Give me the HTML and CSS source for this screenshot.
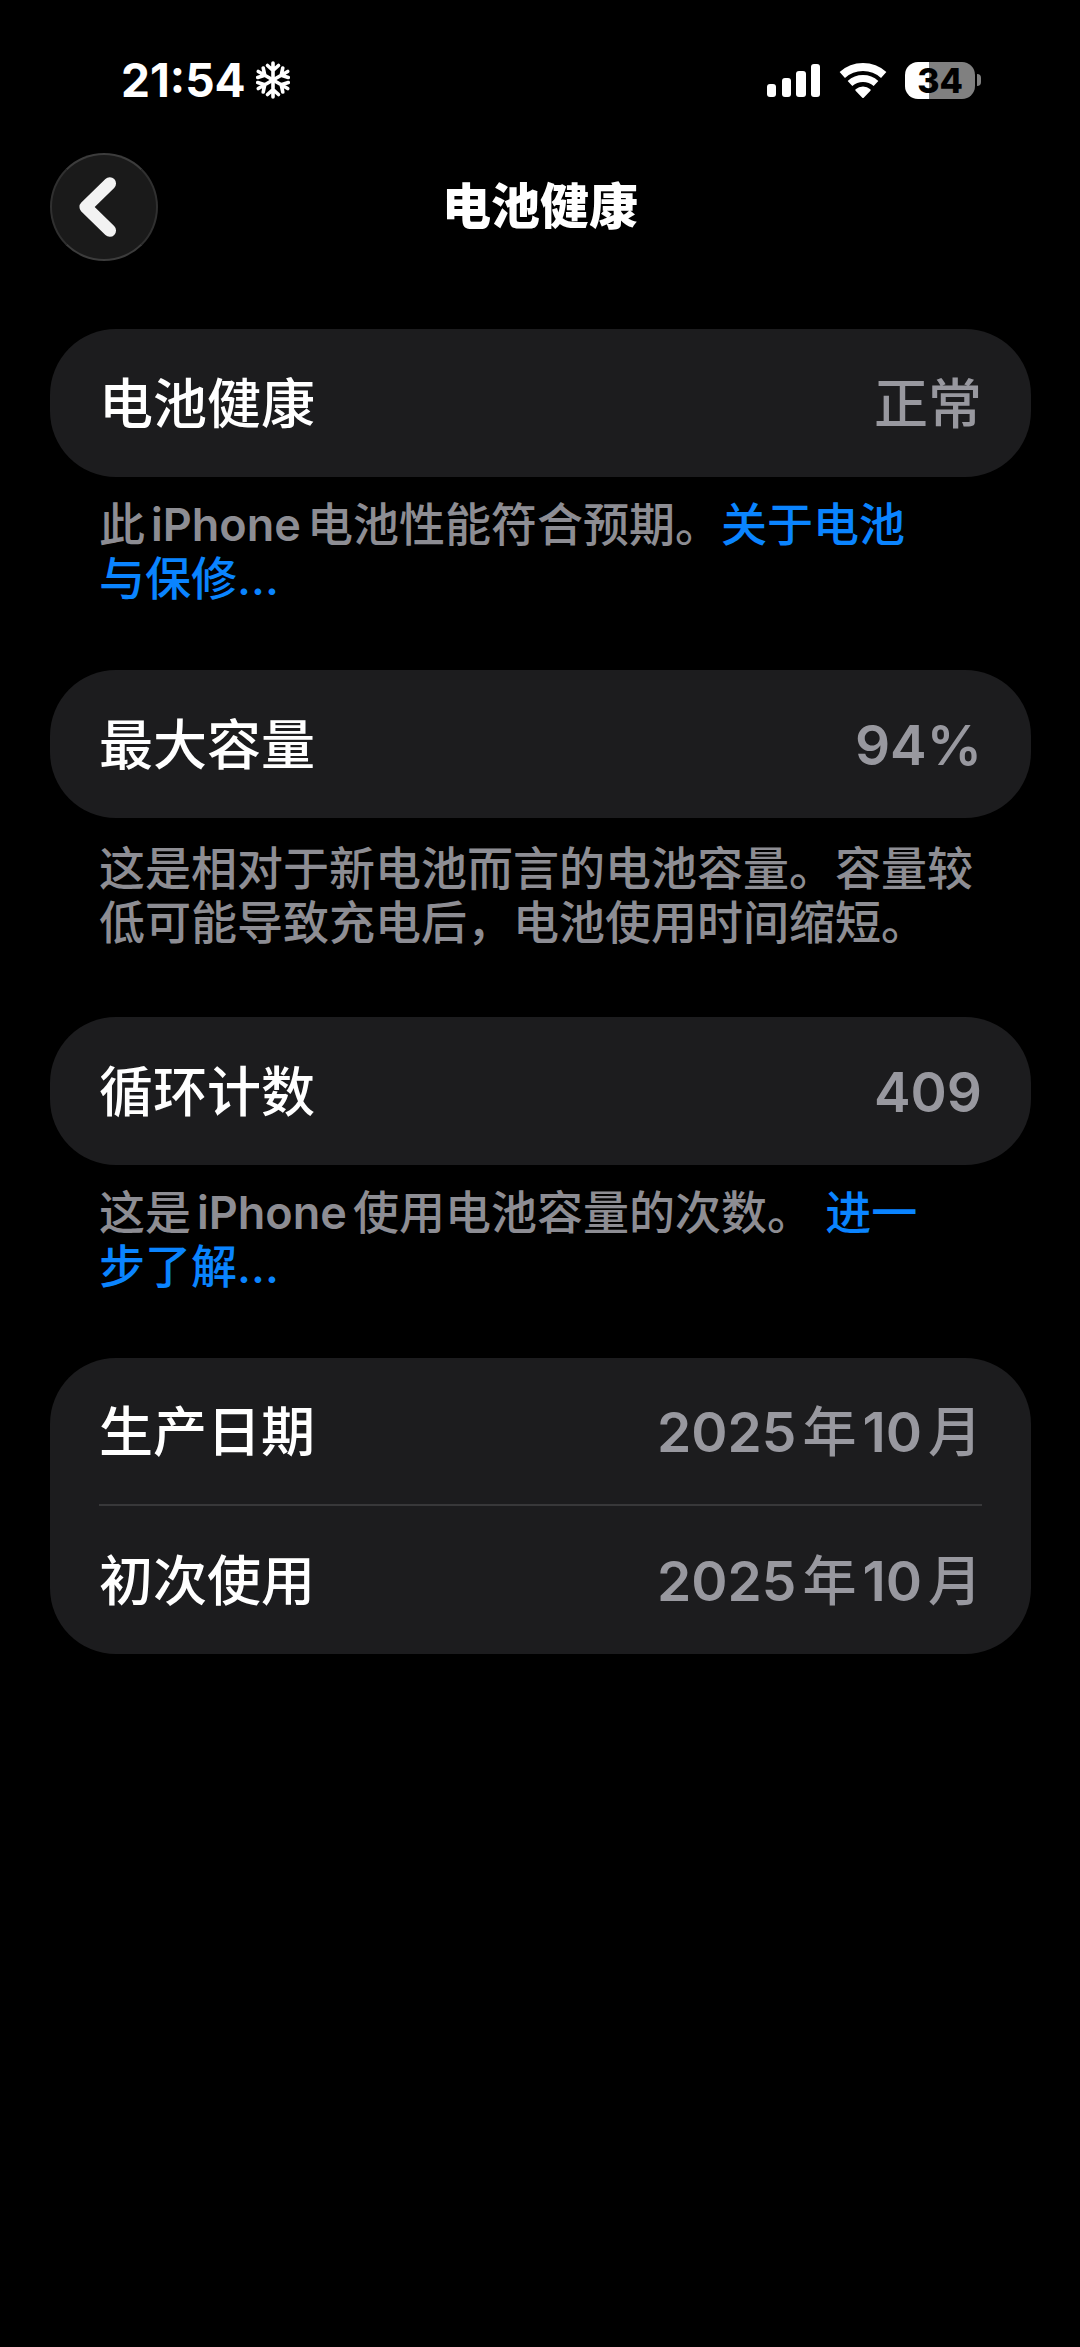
FILE: index.html
```html
<!DOCTYPE html>
<html lang="zh-CN">
<head>
  <meta charset="UTF-8" />
  <meta name="viewport" content="width=device-width, initial-scale=1" />
  <title>电池健康</title>
  <link rel="stylesheet" href="styles.css">
</head>
<body>
  <div class="status-bar">
    <div class="status-left">
      <span class="clock">21:54</span>
      <svg class="snowflake" viewBox="-19 -19 38 38" aria-hidden="true">
        <defs>
          <path id="arm" d="M0 0V-17M-5.5 -14.5L0 -9.5L5.5 -14.5" />
        </defs>
        <use href="#arm" />
        <use href="#arm" transform="rotate(60)" />
        <use href="#arm" transform="rotate(120)" />
        <use href="#arm" transform="rotate(180)" />
        <use href="#arm" transform="rotate(240)" />
        <use href="#arm" transform="rotate(300)" />
      </svg>
    </div>
    <div class="status-right">
      <svg class="signal" viewBox="0 0 54 34" aria-hidden="true">
        <rect x="0" y="21" width="9" height="13" rx="3" />
        <rect x="15" y="15" width="9" height="19" rx="3" />
        <rect x="29" y="8" width="10" height="26" rx="3" />
        <rect x="44" y="1" width="9" height="33" rx="3" />
      </svg>
      <svg class="wifi" viewBox="0 0 48 37" aria-hidden="true">
        <path class="arc-outer" d="M3.3 13A31 31 0 0 1 44.7 13" />
        <path class="arc-inner" d="M11 21.5A19.5 19.5 0 0 1 37 21.5" />
        <path class="wedge" d="M24 35L17.3 28A10.5 10.5 0 0 1 30.7 28Z" />
      </svg>
      <div class="battery">
        <span class="battery-level">34</span>
        <span class="battery-cap"></span>
      </div>
    </div>
  </div>

  <header class="nav-bar">
    <button class="back-btn" type="button" aria-label="返回">
      <svg viewBox="0 0 108 108" aria-hidden="true">
        <path d="M60 29.5L35 54L60 78.5" />
      </svg>
    </button>
    <h1>电池健康</h1>
  </header>

  <main>
    <section>
      <dl class="card">
        <div class="row">
          <dt>电池健康</dt>
          <dd>正常</dd>
        </div>
      </dl>
      <p class="footnote linked">此<span class="latin">iPhone</span>电池性能符合预期。<a href="#">关于电池与保修...</a></p>
    </section>

    <section>
      <dl class="card">
        <div class="row">
          <dt>最大容量</dt>
          <dd><span class="num">94%</span></dd>
        </div>
      </dl>
      <p class="footnote">这是相对于新电池而言的电池容量。容量较低可能导致充电后，电池使用时间缩短。</p>
    </section>

    <section>
      <dl class="card">
        <div class="row">
          <dt>循环计数</dt>
          <dd><span class="num">409</span></dd>
        </div>
      </dl>
      <p class="footnote linked">这是<span class="latin">iPhone</span>使用电池容量的次数。 <a href="#">进一步了解...</a></p>
    </section>

    <section>
      <dl class="card">
        <div class="row">
          <dt>生产日期</dt>
          <dd class="date"><span class="num">2025</span><span>年</span><span class="num">10</span><span>月</span></dd>
        </div>
        <div class="row">
          <dt>初次使用</dt>
          <dd class="date"><span class="num">2025</span><span>年</span><span class="num">10</span><span>月</span></dd>
        </div>
      </dl>
    </section>
  </main>
</body>
</html>
```
FILE: styles.css
```css
* {
  box-sizing: border-box;
  margin: 0;
  padding: 0;
}

body {
  background: #000;
  color: #fff;
  font-family: Inter, "Noto Sans CJK SC", sans-serif;
  font-weight: 500;
}

/* Status bar */
.status-bar {
  display: flex;
  justify-content: space-between;
  align-items: center;
  padding: 56px 99px 49px 121px;
}

.status-left,
.status-right {
  display: flex;
  align-items: center;
  height: 48px;
}

.status-left {
  gap: 8px;
}

.status-right {
  gap: 18px;
}

.clock {
  font-size: 46px;
  line-height: 48px;
  font-weight: 700;
}

.snowflake {
  width: 38px;
  height: 38px;
  fill: none;
  stroke: #fff;
  stroke-width: 3.6;
  stroke-linecap: round;
  stroke-linejoin: round;
}

.signal {
  width: 54px;
  height: 34px;
  fill: #fff;
}

.wifi {
  width: 48px;
  height: 37px;
  fill: none;
  stroke: #fff;
}

.arc-outer {
  stroke-width: 8;
}

.arc-inner {
  stroke-width: 7;
}

.wedge {
  fill: #fff;
  stroke-width: 2;
  stroke-linejoin: round;
}

.battery {
  display: flex;
  align-items: center;
  gap: 2px;
}

.battery-level {
  width: 70px;
  height: 37px;
  border-radius: 13px;
  background: linear-gradient(to right, #fff 34%, #808080 34%);
  color: #000;
  font-size: 34px;
  line-height: 37px;
  font-weight: 800;
  text-align: center;
}

.battery-cap {
  width: 4px;
  height: 12px;
  border-radius: 0 4px 4px 0;
  background: #808080;
}

/* Navigation bar */
.nav-bar {
  display: grid;
  grid-template-columns: 108px 1fr 108px;
  align-items: center;
  padding: 0 50px;
}

.nav-bar h1 {
  font-size: 49px;
  line-height: 60px;
  font-weight: 800;
  text-align: center;
}

.back-btn {
  width: 108px;
  height: 108px;
  border: 2px solid #303030;
  border-top-color: #3c3c3c;
  border-bottom-color: #3c3c3c;
  border-radius: 50%;
  background: #1a1a1a;
  cursor: pointer;
}

.back-btn svg {
  display: block;
  width: 104px;
  height: 104px;
  fill: none;
  stroke: #f2f2f2;
  stroke-width: 13;
  stroke-linecap: round;
  stroke-linejoin: round;
}

/* Grouped list */
main {
  padding: 68px 49px 0 50px;
}

.card {
  background: #1c1c1e;
  border-radius: 66px;
  padding: 0 49px;
}

.row {
  display: flex;
  justify-content: space-between;
  align-items: center;
  height: 148px;
  padding-top: 4px;
  font-size: 54px;
  line-height: 72px;
}

.row:not(:last-child) {
  border-bottom: 2px solid #38383a;
}

.row dd {
  color: #98989f;
}

.num,
.latin {
  font-weight: 600;
  line-height: 1;
}

.num {
  font-size: 55px;
}

.date {
  display: flex;
  align-items: baseline;
  gap: 6px;
}

.footnote {
  padding: 23px 49px 68px;
  color: #8d8d93;
  font-size: 46px;
  line-height: 54px;
}

.footnote.linked {
  padding: 20px 92px 65px 49px;
}

.footnote a {
  color: #0a84ff;
  text-decoration: none;
}

.latin {
  margin: 0 6px;
  font-size: 45px;
}
```
